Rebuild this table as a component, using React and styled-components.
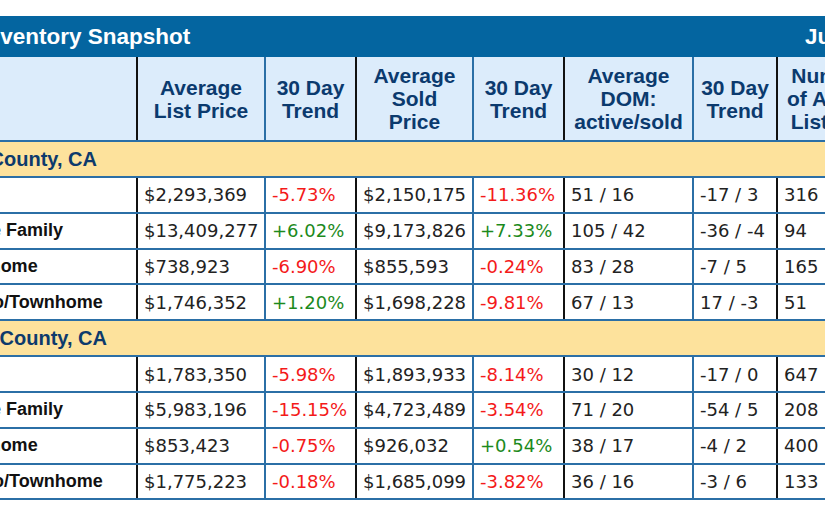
import React from "react";
import styled, { createGlobalStyle } from "styled-components";

const Global = createGlobalStyle`
  html, body { margin: 0; padding: 0; background: #fff; }
  body { overflow: hidden; }
`;

const Viewport = styled.div`
  width: 825px;
  height: 510px;
  overflow: hidden;
  padding-top: 16px;
  box-sizing: border-box;
`;

const Sheet = styled.div`
  width: 1091px;
  margin-left: -122px;
`;

const TitleBar = styled.div`
  display: flex;
  align-items: center;
  height: 41px;
  background: #0465a0;
  color: #fff;
  font-family: "Liberation Sans", Arial, sans-serif;
  font-weight: 700;
  font-size: 22.5px;
  line-height: 41px;
`;

const Title = styled.div`
  flex: 1;
  padding-left: 6px;
  white-space: nowrap;
`;

const DateLabel = styled.div`
  width: 164px;
  white-space: nowrap;
`;

const Table = styled.table`
  width: 1091px;
  table-layout: fixed;
  border-collapse: collapse;
`;

const Head = styled.th`
  background: #dcecfb;
  color: #0b3a6e;
  font-family: "Liberation Sans", Arial, sans-serif;
  font-weight: 700;
  font-size: 21px;
  line-height: 23px;
  text-align: center;
  vertical-align: middle;
  padding: 0 3px;
  height: 83px;
  border-bottom: 2px solid #2b6fa6;
  border-right: 2px solid ${(p) => (p.$thick ? "#111" : "#2b6fa6")};
  border-top: none;
`;

const SectionCell = styled.td`
  background: #fde29c;
  color: #0d3a6c;
  font-family: "Liberation Sans", Arial, sans-serif;
  font-weight: 700;
  font-size: 20px;
  padding: 0 6px;
  height: 34px;
  white-space: nowrap;
  border-top: 2px solid #2b6fa6;
  border-bottom: 2px solid #2b6fa6;
`;

const Row = styled.tr`
  height: 35.8px;
`;

const Label = styled.td`
  font-family: "Liberation Sans", Arial, sans-serif;
  font-weight: 700;
  font-size: 18px;
  color: #111;
  padding: 0 6px 0 4px;
  white-space: nowrap;
  border-bottom: 2px solid #2b6fa6;
  border-right: 2px solid #111;
`;

const Cell = styled.td`
  font-family: "DejaVu Sans", Verdana, sans-serif;
  font-size: 18px;
  color: ${(p) => (p.$tone === "up" ? "#1c8a1c" : p.$tone === "down" ? "#f41a1a" : "#222")};
  padding: 0 6px;
  white-space: nowrap;
  overflow: hidden;
  border-bottom: 2px solid #2b6fa6;
  border-right: 2px solid ${(p) => (p.$thick ? "#111" : "#2b6fa6")};
`;

const widths = [259, 128, 91, 117, 91, 129, 84, 108, 84];

const headers = [
  { t: "", thick: true },
  { t: ["Average", "List Price"] },
  { t: ["30 Day", "Trend"], thick: true },
  { t: ["Average", "Sold", "Price"] },
  { t: ["30 Day", "Trend"], thick: true },
  { t: ["Average", "DOM:", "active/sold"] },
  { t: ["30 Day", "Trend"], thick: true },
  { t: ["Number", "of Active", "Listings"] },
  { t: ["30 Day", "Trend"] },
];

const sections = [
  {
    name: "San Mateo County, CA",
    rows: [
      ["Single Family", "$2,293,369", "-5.73%", "$2,150,175", "-11.36%", "51 / 16", "-17 / 3", "316", "-4.2%"],
      ["Luxury Single Family", "$13,409,277", "+6.02%", "$9,173,826", "+7.33%", "105 / 42", "-36 / -4", "94", "+2.1%"],
      ["Condo/Townhome", "$738,923", "-6.90%", "$855,593", "-0.24%", "83 / 28", "-7 / 5", "165", "-1.8%"],
      ["Luxury Condo/Townhome", "$1,746,352", "+1.20%", "$1,698,228", "-9.81%", "67 / 13", "17 / -3", "51", "+3.0%"],
    ],
  },
  {
    name: "Santa Clara County, CA",
    rows: [
      ["Single Family", "$1,783,350", "-5.98%", "$1,893,933", "-8.14%", "30 / 12", "-17 / 0", "647", "-2.6%"],
      ["Luxury Single Family", "$5,983,196", "-15.15%", "$4,723,489", "-3.54%", "71 / 20", "-54 / 5", "208", "+1.5%"],
      ["Condo/Townhome", "$853,423", "-0.75%", "$926,032", "+0.54%", "38 / 17", "-4 / 2", "400", "-0.5%"],
      ["Luxury Condo/Townhome", "$1,775,223", "-0.18%", "$1,685,099", "-3.82%", "36 / 16", "-3 / 6", "133", "+0.8%"],
    ],
  },
];

const thickCols = [2, 4, 6];
const trendCols = [2, 4];

function tone(i, v) {
  if (!trendCols.includes(i)) return undefined;
  return v.startsWith("+") ? "up" : "down";
}

export default function App() {
  return (
    <Viewport>
      <Global />
      <Sheet>
        <TitleBar>
          <Title>Housing Inventory Snapshot</Title>
          <DateLabel>July 2024</DateLabel>
        </TitleBar>
        <Table>
          <colgroup>
            {widths.map((w, i) => (
              <col key={i} style={{ width: w }} />
            ))}
          </colgroup>
          <thead>
            <tr>
              {headers.map((h, i) => (
                <Head key={i} $thick={h.thick}>
                  {Array.isArray(h.t)
                    ? h.t.map((l, j) => (
                        <React.Fragment key={j}>
                          {j > 0 && <br />}
                          {l}
                        </React.Fragment>
                      ))
                    : h.t}
                </Head>
              ))}
            </tr>
          </thead>
          <tbody>
            {sections.map((s) => (
              <React.Fragment key={s.name}>
                <tr>
                  <SectionCell colSpan={9}>{s.name}</SectionCell>
                </tr>
                {s.rows.map((r) => (
                  <Row key={r[0]}>
                    <Label>{r[0]}</Label>
                    {r.slice(1).map((v, i) => (
                      <Cell key={i} $thick={thickCols.includes(i + 1)} $tone={tone(i + 1, v)}>
                        {v}
                      </Cell>
                    ))}
                  </Row>
                ))}
              </React.Fragment>
            ))}
          </tbody>
        </Table>
      </Sheet>
    </Viewport>
  );
}
